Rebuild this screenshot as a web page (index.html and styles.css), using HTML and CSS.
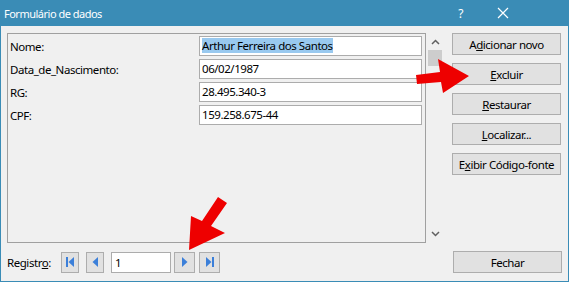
FILE: index.html
```html
<!DOCTYPE html>
<html lang="pt">
<head>
<meta charset="utf-8">
<title>Formulário de dados</title>
<link rel="stylesheet" href="styles.css">
</head>
<body>
<div class="window">
  <div class="titlebar">
    <span class="title">Formulário de dados</span>
    <span class="help">?</span>
    <svg class="close" width="12" height="12" viewBox="0 0 12 12"><path d="M1 1 L11 11 M11 1 L1 11" stroke="#fff" stroke-width="1.2" fill="none"/></svg>
  </div>
  <div class="content">
    <div class="main">
      <div class="panel">
        <div class="row"><span class="label">Nome:</span><div class="input"><span class="sel">Arthur Ferreira dos Santos</span></div></div>
        <div class="row"><span class="label">Data_de_Nascimento:</span><div class="input">06/02/1987</div></div>
        <div class="row"><span class="label">RG:</span><div class="input">28.495.340-3</div></div>
        <div class="row"><span class="label">CPF:</span><div class="input">159.258.675-44</div></div>
      </div>
      <div class="scrollbar">
        <svg class="chev" width="9" height="6" viewBox="0 0 9 6"><path d="M1 5 L4.5 1.5 L8 5" stroke="#606060" stroke-width="1.5" fill="none"/></svg>
        <div class="thumb"></div>
        <div class="spacer"></div>
        <svg class="chev" width="9" height="6" viewBox="0 0 9 6"><path d="M1 1 L4.5 4.5 L8 1" stroke="#606060" stroke-width="1.5" fill="none"/></svg>
      </div>
      <div class="buttons">
        <div class="btn">A<u>d</u>icionar novo</div>
        <div class="btn"><u>E</u>xcluir</div>
        <div class="btn"><u>R</u>estaurar</div>
        <div class="btn"><u>L</u>ocalizar...</div>
        <div class="btn">E<u>x</u>ibir Código-fonte</div>
      </div>
    </div>
    <div class="footer">
      <span class="reg">Registr<u>o</u>:</span>
      <div class="nav small"><svg width="10" height="12" viewBox="0 0 10 12"><rect x="1" y="1" width="2" height="10" fill="#3b7fd9"/><path d="M9 1 L3.5 6 L9 11 Z" fill="#3b7fd9"/></svg></div>
      <div class="nav small"><svg width="10" height="12" viewBox="0 0 10 12"><path d="M8 1 L2.5 6 L8 11 Z" fill="#3b7fd9"/></svg></div>
      <div class="navinput">1</div>
      <div class="nav"><svg width="10" height="12" viewBox="0 0 10 12"><path d="M2 1 L7.5 6 L2 11 Z" fill="#3b7fd9"/></svg></div>
      <div class="nav"><svg width="10" height="12" viewBox="0 0 10 12"><path d="M1 1 L6.5 6 L1 11 Z" fill="#3b7fd9"/><rect x="7" y="1" width="2" height="10" fill="#3b7fd9"/></svg></div>
      <div class="fill"></div>
      <div class="btn close-btn">Fechar</div>
    </div>
  </div>
  <svg class="annot" width="569" height="282" viewBox="0 0 569 282">
    <polygon points="416,75 440,72 438,59 469,76 443,93 441,82 417,84" fill="#ee0000"/>
    <polygon points="189,250 191,216 202,221 218,197 227,203 211,226 225,233" fill="#ee0000"/>
  </svg>
</div>
</body>
</html>
```

FILE: styles.css
```css
* { box-sizing: border-box; }
html, body { margin: 0; padding: 0; }
body { font-family: "Noto Sans", "DejaVu Sans", sans-serif; font-size: 11.5px; letter-spacing: -0.45px; color: #000; background: #fff; }

.window {
  position: relative;
  width: 569px;
  height: 282px;
  background: #3a8cb6;
  padding: 0 1px 1px 1px;
  display: flex;
  flex-direction: column;
}

.titlebar {
  height: 26px;
  display: flex;
  align-items: center;
  color: #fff;
  padding-left: 3px;
}
.title { font-size: 11px; letter-spacing: -0.5px; flex: 1; }
.help { font-size: 12px; margin-right: 34px; }
.close { margin-right: 59px; }

.content {
  flex: 1;
  background: #f0f0f0;
  padding: 7px 6px 0 6px;
  display: flex;
  flex-direction: column;
}

.main { display: flex; height: 210px; }

.panel {
  width: 419px;
  height: 210px;
  border: 1px solid #a0a0a0;
  padding: 2px 3px 0 2px;
  display: flex;
  flex-direction: column;
  gap: 3px;
}
.row { display: flex; height: 20px; align-items: center; white-space: nowrap; }
.label { width: 189px; }
.input {
  width: 223px;
  height: 20px;
  border: 1px solid #acacac;
  background: #fff;
  padding-left: 2px;
  line-height: 18px;
}
.sel { background: #99c9ef; }

.scrollbar {
  width: 17px;
  height: 210px;
  display: flex;
  flex-direction: column;
  align-items: center;
  padding: 6px 0 6px 1px;
}
.thumb { width: 14px; height: 16px; background: #cdcdcd; margin-top: 5px; }
.spacer { flex: 1; }

.buttons {
  margin-left: 9px;
  display: flex;
  flex-direction: column;
  gap: 8px;
}
.btn {
  width: 109px;
  height: 22px;
  background: #e1e1e1;
  border: 1px solid #adadad;
  display: flex;
  align-items: center;
  justify-content: center;
  white-space: nowrap;
}

.footer {
  margin-top: 8px;
  height: 22px;
  display: flex;
  align-items: center;
}
.reg { width: 54px; }
.nav {
  width: 21px;
  height: 21px;
  background: #e1e1e1;
  border: 1px solid #adadad;
  display: flex;
  align-items: center;
  justify-content: center;
  margin-right: 4px;
}
.nav.small { width: 18px; margin-right: 7px; }
.navinput {
  width: 60px;
  height: 21px;
  background: #fff;
  border: 1px solid #acacac;
  padding-left: 3px;
  line-height: 19px;
  margin-right: 3px;
}
.fill { flex: 1; }
.close-btn { height: 22px; }

.annot { position: absolute; left: 0; top: 0; pointer-events: none; }
```
